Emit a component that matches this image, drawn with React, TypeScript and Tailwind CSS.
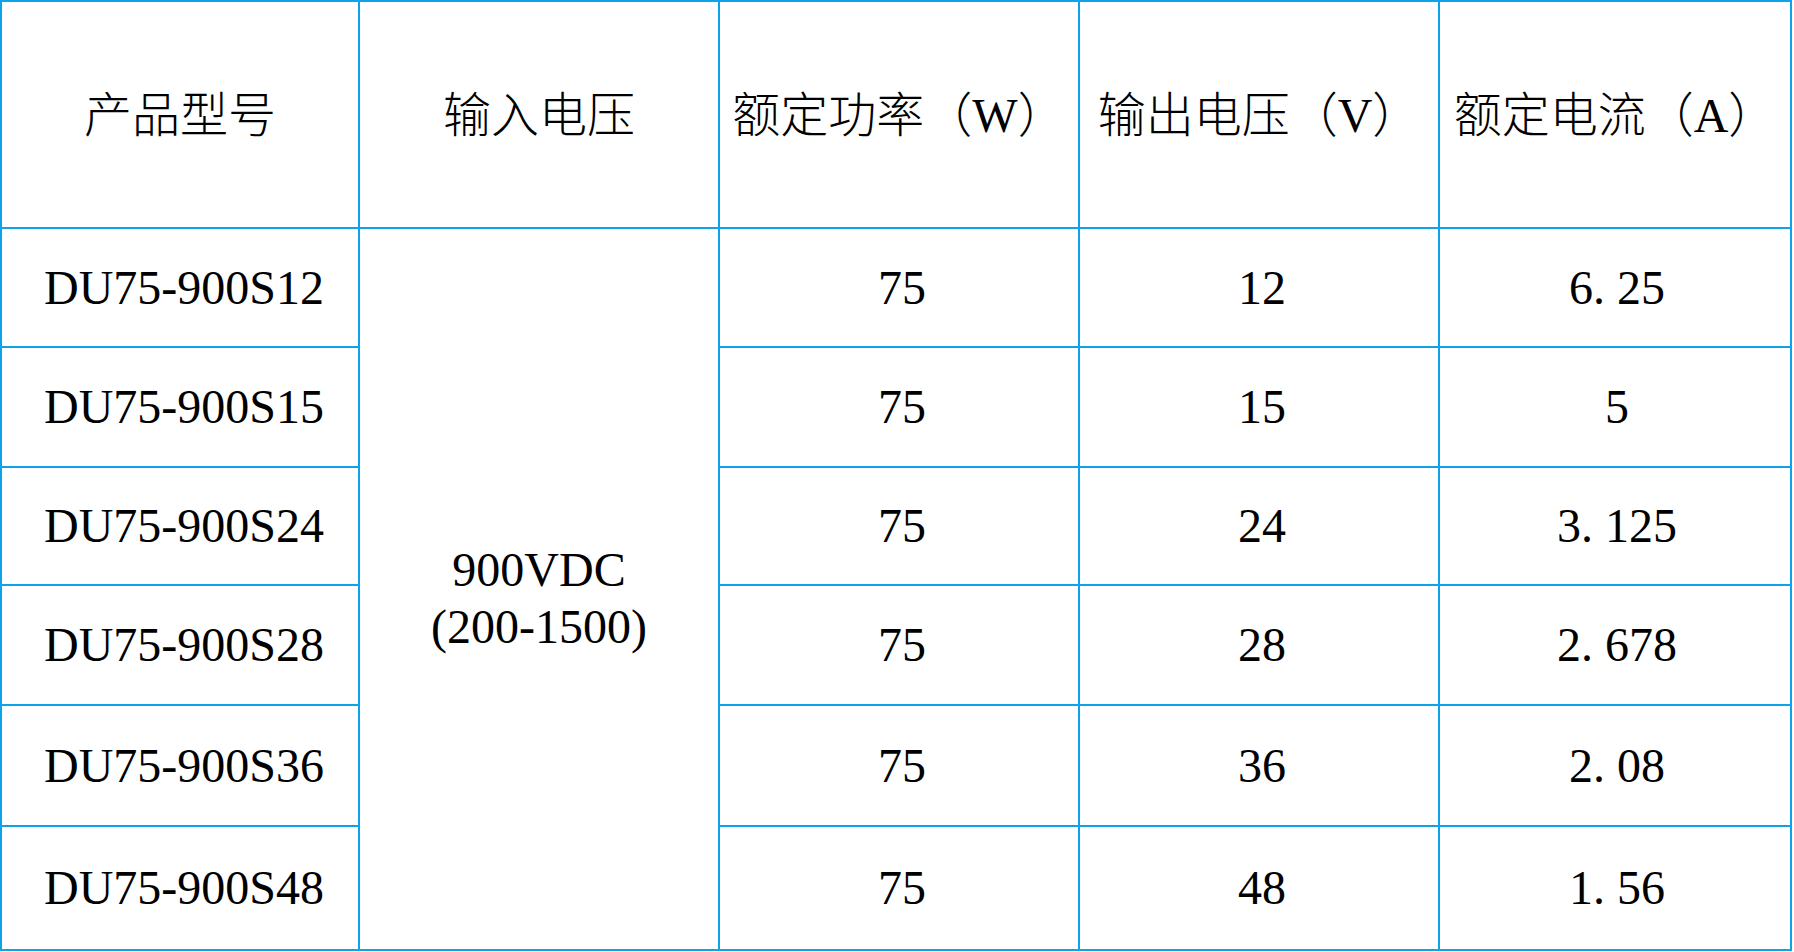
import React from "react";

const headers = ["产品型号", "输入电压", "额定功率（W）", "输出电压（V）", "额定电流（A）"];

const rows = [
  ["DU75-900S12", "75", "12", "6.25"],
  ["DU75-900S15", "75", "15", "5"],
  ["DU75-900S24", "75", "24", "3.125"],
  ["DU75-900S28", "75", "28", "2.678"],
  ["DU75-900S36", "75", "36", "2.08"],
  ["DU75-900S48", "75", "48", "1.56"],
];

function Num({ v }: { v: string }) {
  const parts = v.split(".");
  if (parts.length === 1) return <>{v}</>;
  return (
    <>
      {parts[0]}
      <span className="inline-block w-[0.5em] text-left">.</span>
      {parts[1]}
    </>
  );
}

const cell =
  "bg-white flex items-center justify-center text-black text-[48px] leading-none whitespace-nowrap";

export default function App() {
  return (
    <div className="w-[1794px] h-[952px] bg-white font-['Liberation_Serif','Noto_Sans_CJK_SC',serif]">
      <div className="inline-grid grid-cols-[356px_358px_358px_358px_350px] grid-rows-[225px_117px_118px_116px_118px_119px_122px] gap-[2px] p-[2px] bg-[#0ea2e8]">
        {headers.map((h) => (
          <div key={h} className={cell + " pt-[2px] font-light"}>
            {h}
          </div>
        ))}
        {rows.map((r, i) => (
          <React.Fragment key={r[0]}>
            <div className={cell + " col-start-1 pl-[8px]"} style={{ gridRowStart: i + 2 }}>
              {r[0]}
            </div>
            {i === 0 && (
              <div className="bg-white col-start-2 row-start-2 row-span-6 flex flex-col items-center justify-center text-black text-[48px] leading-[57px] pt-[18px]">
                <span>900VDC</span>
                <span>(200-1500)</span>
              </div>
            )}
            <div className={cell + " col-start-3 pl-[6px]"} style={{ gridRowStart: i + 2 }}>
              {r[1]}
            </div>
            <div className={cell + " col-start-4 pl-[6px]"} style={{ gridRowStart: i + 2 }}>
              {r[2]}
            </div>
            <div className={cell + " col-start-5 pl-[4px]"} style={{ gridRowStart: i + 2 }}>
              <Num v={r[3]} />
            </div>
          </React.Fragment>
        ))}
      </div>
    </div>
  );
}
